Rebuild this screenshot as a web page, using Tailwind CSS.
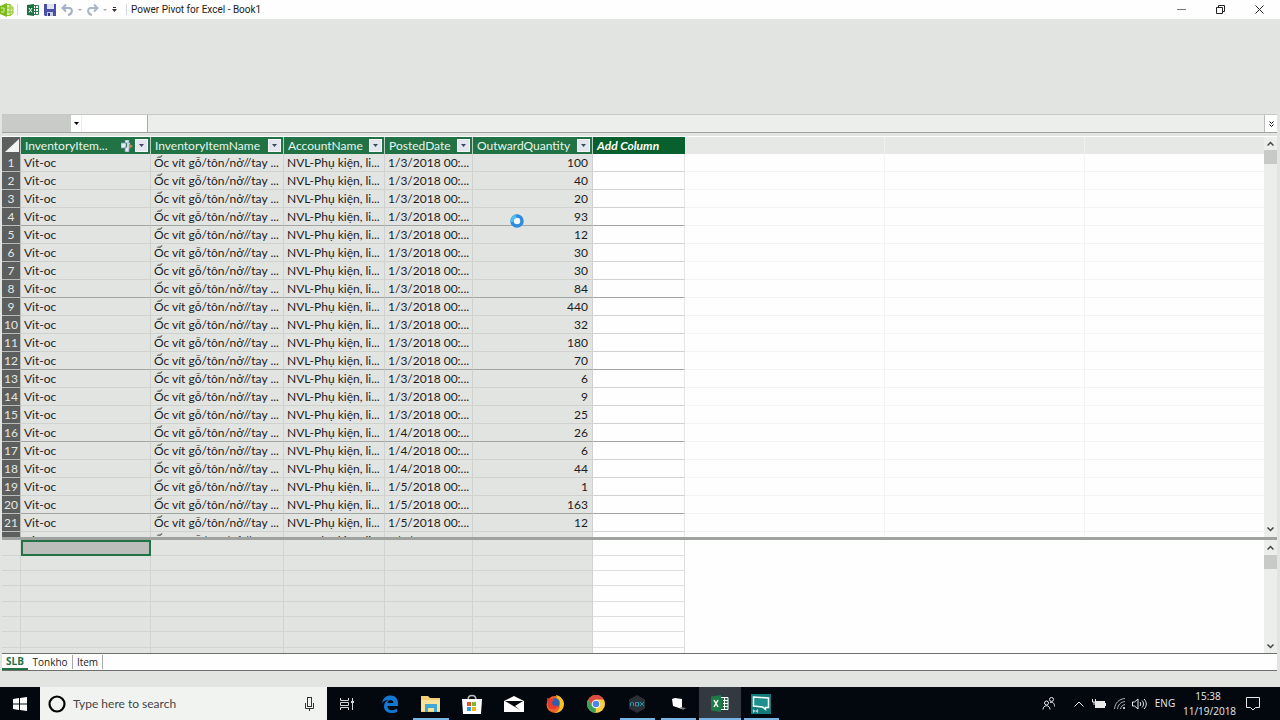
<!DOCTYPE html>
<html lang="en">
<head>
  <meta charset="UTF-8">
  <meta name="viewport" content="width=device-width, initial-scale=1.0">
  <title>Power Pivot for Excel - Book1</title>
  <script src="https://cdn.jsdelivr.net/npm/@tailwindcss/browser@4"></script>
</head>
<body class="h-screen flex flex-col overflow-hidden bg-[#e2e4e2] text-[#1c1c1c] text-[12px] font-['Lato','Open_Sans',sans-serif]">

  <!-- Title bar -->
  <header class="h-[19px] shrink-0 flex items-center bg-[#fdfefd]">
    <svg class="w-[14px] h-[14px]" viewBox="0 0 14 14">
      <path d="M0 3l7-3v14l-7-3z" fill="#7dbb1c"/>
      <path d="M7 1.500h3l3 3v6l-3 2H7" fill="#d9efad" stroke="#8cc52d"/>
      <path d="M7 5h6M7 9h6M10 1v12" stroke="#8cc52d"/>
      <path d="M1 5h3v4H1" fill="none" stroke="#d9efad"/>
    </svg>
    <span class="ml-[3px] w-px h-[11px] bg-gray-300"></span>
    <svg class="ml-[9px] w-3 h-3" viewBox="0 0 12 12">
      <path d="M6 1.500h5.500v9H6z" fill="#fff" stroke="#2a7a4d"/>
      <path d="M8.500 2v8M7 4.500h4M7 7.500h4" stroke="#2a7a4d"/>
      <path d="M0 1l7-1v12l-7-1z" fill="#1d6f42"/>
      <path d="M2 4l3 4.500M5 4L2 8.500" stroke="#fff"/>
    </svg>
    <button class="ml-[5px]" aria-label="Save">
      <svg class="w-3 h-3" viewBox="0 0 12 12">
        <path d="M0 0h12v12H1L0 11z" fill="#4a4fa8"/>
        <path d="M3 0h7v5H3z" fill="#dfe3f5"/>
        <path d="M3 8h6v4H3z" fill="#c9cde4"/>
        <path d="M4 9h2v3H4z" fill="#2f3379"/>
      </svg>
    </button>
    <button class="ml-[5px]" aria-label="Undo">
      <svg class="w-[13px] h-3" viewBox="0 0 13 12"><path d="M1 4h7c4 0 4 6-1 7M5 0.500L1.500 4 5 7.500" fill="none" stroke="#a3afc6" stroke-width="2"/></svg>
    </button>
    <svg class="ml-1 w-1 h-1" viewBox="0 0 4 4"><path d="M0 1h4L2 3z" fill="#aaa"/></svg>
    <button class="ml-1" aria-label="Redo">
      <svg class="w-[13px] h-3" viewBox="0 0 13 12"><path d="M12 4H5C1 4 1 10 6 11M8 0.500L11.500 4 8 7.500" fill="none" stroke="#a9b6c6" stroke-width="2"/></svg>
    </button>
    <svg class="ml-1 w-1 h-1" viewBox="0 0 4 4"><path d="M0 1h4L2 3z" fill="#aaa"/></svg>
    <button class="ml-[5px]" aria-label="Customize toolbar">
      <svg class="w-[5px] h-[6px]" viewBox="0 0 5 6"><path d="M1 0h3v1H1zM0 2h5L2.500 5z" fill="#333"/></svg>
    </button>
    <span class="ml-[9px] w-px h-[11px] bg-gray-300"></span>
    <h1 class="ml-1 text-[10px] leading-none font-['Roboto',sans-serif]">Power Pivot for Excel - Book1</h1>
    <div class="ml-auto mr-4 flex items-center gap-[30px]">
      <button aria-label="Minimize"><svg class="w-[9px] h-[9px]" viewBox="0 0 9 9"><path d="M0 4.500h9" stroke="#777"/></svg></button>
      <button aria-label="Restore"><svg class="w-[9px] h-[9px]" viewBox="0 0 9 9" fill="none" stroke="#222"><path d="M0.500 2.500h6v6h-6zM2.500 2V0.500h6v6H7"/></svg></button>
      <button aria-label="Close"><svg class="w-[9px] h-[9px]" viewBox="0 0 9 9"><path d="M0.500 0.500l8 8M8.500 0.500l-8 8" stroke="#222"/></svg></button>
    </div>
  </header>

  <main class="flex-1 min-h-0 flex flex-col pl-[2px] pr-[3px]">

    <!-- Empty ribbon -->
    <div class="h-[95px] shrink-0"></div>

    <!-- Formula bar -->
    <div class="h-[19px] shrink-0 flex border-t border-b border-t-[#c6c8c6] border-b-[#9fa39f] bg-[#eceeec]">
      <input class="w-[69px] bg-[#c9cbc9]" type="text" aria-label="Name box">
      <button class="w-[10px] bg-white flex items-center justify-center" aria-label="Name box list">
        <svg class="w-[5px] h-[3px]" viewBox="0 0 5 3"><path d="M0 0h5L2.500 3z" fill="#000"/></svg>
      </button>
      <div class="w-[67px] bg-white border-l border-r border-l-[#eceeec] border-r-[#a9aba9]"></div>
      <input class="flex-1 bg-[#eceeec]" type="text" aria-label="Formula">
      <button class="w-[13px] bg-white border-l border-[#bbb] flex items-center justify-center" aria-label="Expand formula bar">
        <svg class="w-[5px] h-[6px]" viewBox="0 0 5 6"><path d="M0.500 0.500l2 2 2-2M0.500 3.500l2 2 2-2" fill="none" stroke="#000"/></svg>
      </button>
    </div>
    <div class="h-1 shrink-0 border-b border-white"></div>

    <!-- Data grid -->
    <section class="flex-1 min-h-0 flex bg-[#fdfefd]">
      <div class="flex-1 min-w-0 overflow-hidden">
        <table class="w-full table-fixed border-separate border-spacing-0 whitespace-nowrap">
          <colgroup>
            <col class="w-[19px]"><col class="w-[130px]"><col class="w-[133px]"><col class="w-[101px]"><col class="w-[88px]"><col class="w-[120px]"><col class="w-[92px]"><col class="w-[200px]"><col class="w-[200px]"><col>
          </colgroup>
          <thead>
            <tr id="columns">
              <th class="h-[17px] p-0 bg-[#5c5f5d] border-r border-[#c5c8c5]" aria-label="Select all">
                <svg class="ml-[3px] w-[14px] h-[13px]" viewBox="0 0 14 13"><path d="M14 0v13H0z" fill="#f2f3f2"/></svg>
              </th>
            </tr>
          </thead>
          <tbody id="rows"></tbody>
        </table>
      </div>
      <div class="w-[13px] flex flex-col items-center bg-[#eceeec]">
        <svg class="my-1 w-[7px] h-[5px]" viewBox="0 0 7 5"><path d="M0.500 4.500l3-3 3 3" fill="none" stroke="#444" stroke-width="1.500"/></svg>
        <div class="w-full h-[14px] bg-[#c8cac8]"></div>
        <svg class="mt-auto mb-[5px] w-[7px] h-[5px]" viewBox="0 0 7 5"><path d="M0.500 0.500l3 3 3-3" fill="none" stroke="#444" stroke-width="1.500"/></svg>
      </div>
    </section>

    <!-- Splitter -->
    <div class="h-[3px] shrink-0 bg-[#9fa29f]"></div>

    <!-- Calculation area -->
    <section class="h-[113px] shrink-0 flex bg-[#fdfefd]">
      <div class="flex-1 min-w-0 overflow-hidden">
        <table class="w-[683px] table-fixed border-separate border-spacing-0" aria-label="Calculation area">
          <colgroup>
            <col class="w-[19px]"><col class="w-[130px]"><col class="w-[133px]"><col class="w-[101px]"><col class="w-[88px]"><col class="w-[120px]"><col class="w-[92px]">
          </colgroup>
          <tbody id="measures"></tbody>
        </table>
      </div>
      <div class="w-[13px] flex flex-col items-center bg-[#eceeec]">
        <svg class="my-[5px] w-[7px] h-[5px]" viewBox="0 0 7 5"><path d="M0.500 4.500l3-3 3 3" fill="none" stroke="#444" stroke-width="1.500"/></svg>
        <div class="w-full h-[14px] bg-[#c8cac8]"></div>
        <svg class="mt-auto mb-1 w-[7px] h-[5px]" viewBox="0 0 7 5"><path d="M0.500 0.500l3 3 3-3" fill="none" stroke="#444" stroke-width="1.500"/></svg>
      </div>
    </section>

    <!-- Sheet tabs -->
    <nav class="h-[18px] shrink-0 flex items-center border-t border-b border-[#6d706d] bg-[#fdfefd] text-[10px] leading-[14px] font-['Open_Sans',sans-serif]">
      <a href="#slb" class="w-[26px] text-center font-bold text-[#217346] border-b-2 border-[#217346]">SLB</a>
      <a href="#tonkho" class="w-[45px] text-center border-r border-[#aaa]">Tonkho</a>
      <a href="#item" class="w-[30px] text-center border-r border-[#aaa]">Item</a>
    </nav>
    <div class="h-4 shrink-0"></div>
  </main>

  <!-- Taskbar -->
  <footer class="h-[33px] shrink-0 flex bg-[#03080e] text-[#e8eaec]">
    <button class="w-10 flex items-center justify-center" aria-label="Start">
      <svg class="w-[14px] h-[14px]" viewBox="0 0 14 14"><path d="M0 2l6-1v5.500H0zM7 1l7-1v6.500H7zM0 7.500h6V13l-6-1zM7 7.500h7V14l-7-1z" fill="#fff"/></svg>
    </button>
    <label class="w-[287px] flex items-center bg-[#f1f3f1] pl-2 pr-[13px]">
      <svg class="w-[18px] h-[18px]" viewBox="0 0 18 18"><circle cx="9" cy="9" r="7.500" fill="none" stroke="#000" stroke-width="2.200"/></svg>
      <input class="ml-[7px] flex-1 min-w-0 text-[12px] placeholder:text-[#444]" type="text" placeholder="Type here to search" aria-label="Search">
      <svg class="w-[9px] h-[14px]" viewBox="0 0 9 14" fill="none" stroke="#333"><rect x="2.500" y="0.500" width="4" height="9"/><path d="M0.500 6v5.500h8V6M4.500 11.500V14"/></svg>
    </label>
    <button class="w-[40px] flex items-center justify-center" aria-label="Task view">
      <svg class="w-[14px] h-[14px]" viewBox="0 0 14 14" fill="none" stroke="#d5d7d9"><path d="M0.500 1v2.500h8V1M0.500 13v-2.500h8V13M0.500 5.500h8v3h-8zM12.500 1v12"/><path d="M11 5h3" stroke-width="2"/></svg>
    </button>
    <div class="w-[413px] ml-[2px] flex">
      <button class="flex-1 flex items-center justify-center" aria-label="Edge">
        <svg class="w-[18px] h-[18px]" viewBox="0 0 18 18"><path d="M1 8C2 3 5 0.500 9.500 0.500c5 0 7.500 3.500 7.500 8V11H6.500c0 5 6 5 9.500 2.500V17C10 19.500 3 17.500 3 11.500 3 8 5 6 7.500 5 4.500 5 2.500 6 1 8zM6.500 8h6c0-4-5.500-4-6 0z" fill="#1477d2"/></svg>
      </button>
      <button class="flex-1 flex items-center justify-center relative" aria-label="File Explorer">
        <svg class="w-[19px] h-4" viewBox="0 0 19 16"><path d="M0 0h7l2 2h10v14H0z" fill="#f3d078"/><path d="M0 4h19v11H0z" fill="#f9e29a"/><path d="M4 16V8h12v8h-3v-4H7v4z" fill="#41a9d6"/></svg>
        <span class="absolute bottom-0 inset-x-[3px] h-[2px] bg-[#76b5e6]"></span>
      </button>
      <button class="flex-1 flex items-center justify-center" aria-label="Store">
        <svg class="w-5 h-5" viewBox="0 0 20 20"><path d="M6 6c0-6 8-6 8 0" fill="none" stroke="#bbb" stroke-width="1.500"/><path d="M0 5h20l-1 15H1z" fill="#fff"/><path d="M5 8h4v4H5z" fill="#e8502c"/><path d="M10 8h4v4h-4z" fill="#7db82b"/><path d="M5 13h4v4H5z" fill="#2a9fe0"/><path d="M10 13h4v4h-4z" fill="#f5b70d"/></svg>
      </button>
      <button class="flex-1 flex items-center justify-center" aria-label="Mail">
        <svg class="w-5 h-4" viewBox="0 0 20 16"><path d="M0 5l10-5 10 5v11H0z" fill="#fff"/><path d="M1 5h18l-8 5 5 4L1 5z" fill="#03080e"/></svg>
      </button>
      <button class="flex-1 flex items-center justify-center" aria-label="Firefox">
        <svg class="w-[18px] h-[18px]" viewBox="0 0 18 18"><circle cx="9" cy="9.500" r="8.500" fill="#f0622a"/><path d="M10 0c5 1 8 5 8 9 0 5-4 9-9 9 5-3 6-7 3-11z" fill="#fcc21f"/><circle cx="9" cy="8" r="4.800" fill="#2e5fae"/><path d="M1 3l3 1c2-1 3 0 4 1L6 7c0 4 3 5 6 3-1 5-8 6-10 1z" fill="#e83b2c"/></svg>
      </button>
      <button class="flex-1 flex items-center justify-center" aria-label="Chrome">
        <svg class="w-[18px] h-[18px]" viewBox="0 0 18 18"><circle cx="9" cy="9" r="9" fill="#f9ce3e"/><path d="M1.200 4.500A9 9 0 0 1 16.800 4.500H9L5 11z" fill="#dc4b3e"/><path d="M1.200 4.500L5 11.300 9 13.500 8.500 18A9 9 0 0 1 1.200 4.500z" fill="#38a155"/><circle cx="9" cy="9" r="4.300" fill="#fff"/><circle cx="9" cy="9" r="3.300" fill="#4b86ec"/></svg>
      </button>
      <button class="flex-1 flex items-center justify-center relative" aria-label="Nox">
        <svg class="w-[18px] h-[18px]" viewBox="0 0 18 18"><path d="M9 0l8 4.500v9L9 18l-8-4.500v-9z" fill="#2b2f38"/><path d="M2.500 11V8q2-1.500 3 0v3M7.500 7.500h3v3.500h-3zM12 7l4 4M16 7l-4 4" fill="none" stroke="#2298a8"/></svg>
        <span class="absolute bottom-0 inset-x-[3px] h-[2px] bg-[#76b5e6]"></span>
      </button>
      <button class="flex-1 flex items-center justify-center relative" aria-label="Notes">
        <svg class="w-[15px] h-3" viewBox="0 0 15 12"><path d="M1 1l3-1 7 1v10L2 8z" fill="#fff"/><path d="M9 9l6 1-3 2z" fill="#70777c"/></svg>
        <span class="absolute bottom-0 inset-x-[3px] h-[2px] bg-[#76b5e6]"></span>
      </button>
      <button class="flex-1 flex items-center justify-center relative bg-[#323940]" aria-label="Excel">
        <svg class="w-[18px] h-[17px]" viewBox="0 0 18 17"><path d="M10 2.500h7v12h-7" fill="#1d7044" stroke="#fff"/><path d="M12 5.500h5M12 8.500h5M12 11.500h5M13.500 3v11" stroke="#fff"/><path d="M0 1.500L10 0v17L0 15.500z" fill="#1f7a48"/><path d="M3 5l4 7M7 5l-4 7" stroke="#fff" stroke-width="1.500"/></svg>
        <span class="absolute bottom-0 inset-x-0 h-[2px] bg-[#76b5e6]"></span>
      </button>
      <button class="flex-1 flex items-center justify-center relative" aria-label="Screen recorder">
        <svg class="w-5 h-5" viewBox="0 0 20 20"><path d="M0 0h20v20H0z" fill="#157a7b"/><path d="M2.500 3l15 1v9.500h-3v2l-3-2.500-9-1z" fill="#1d8f8e" stroke="#fff" stroke-width="1.500"/><path d="M2 15v4l5-4v4z" fill="#b9dcdc"/></svg>
        <span class="absolute bottom-0 inset-x-[3px] h-[2px] bg-[#76b5e6]"></span>
      </button>
    </div>
    <div class="ml-auto pr-5 flex items-center text-[10px] leading-[15px] font-['Open_Sans',sans-serif]">
      <svg class="w-[13px] h-[13px]" viewBox="0 0 13 13" fill="none" stroke="#e8eaec"><circle cx="4.500" cy="6" r="2"/><path d="M1 12.500c0-5 7-5 7 0"/><circle cx="9.500" cy="2.500" r="2"/><path d="M8 5.500c3-1 4.500 1 4.500 4"/></svg>
      <svg class="ml-[19px] w-[10px] h-[6px]" viewBox="0 0 10 6" fill="none" stroke="#e8eaec"><path d="M0.500 5.500l4.500-4.500 4.500 4.500"/></svg>
      <svg class="ml-2 w-[14px] h-[10px]" viewBox="0 0 14 10"><path d="M3 2h10v2h1v3h-1v2H3z" fill="#e8eaec"/><path d="M0.500 0v3h3V0M2 3v3" fill="none" stroke="#e8eaec"/></svg>
      <svg class="ml-2 w-[11px] h-[11px]" viewBox="0 0 11 11" fill="none" stroke="#aeb2b5"><path d="M0.500 11C1 5 5 1 11 0.500M3.500 11c0.500-4 3-7 7.500-7.500M6.500 11c0-2 2-4 4.500-4.500"/><circle cx="10" cy="10" r="0.700" stroke="#fff"/></svg>
      <svg class="ml-[7px] w-[15px] h-3" viewBox="0 0 15 12" fill="none" stroke="#e8eaec"><path d="M0.500 4v4h2L6 11V1L2.500 4zM8 4c1 1 1 3 0 4M10 2.500c2 2 2 5 0 7M12 1c3 3 3 7 0 10"/></svg>
      <span class="w-[36px] text-center">ENG</span>
      <time class="w-[50px] text-center">15:38<br>11/19/2018</time>
      <button class="ml-[13px]" aria-label="Notifications">
        <svg class="w-[14px] h-[14px]" viewBox="0 0 14 14" fill="none" stroke="#e8eaec"><path d="M0.500 0.500h13v10h-4L7 13l-2.500-2.500h-4z"/></svg>
      </button>
    </div>
  </footer>

  <!-- Busy cursor -->
  <svg class="absolute left-[510px] top-[214px] w-[14px] h-[14px]" viewBox="0 0 14 14"><circle cx="7" cy="7" r="5" fill="#f4f8fb" stroke="#2f8be0" stroke-width="3.500"/><path d="M2.200 8A5 5 0 0 1 6 2.200" fill="none" stroke="#4cc0ee" stroke-width="3.500"/></svg>

  <script>
    const columns = ["InventoryItem...", "InventoryItemName", "AccountName", "PostedDate", "OutwardQuantity"];
    const quantities = [100, 40, 20, 93, 12, 30, 30, 84, 440, 32, 180, 70, 6, 9, 25, 26, 6, 44, 1, 163, 12, 8];

    const relationIcon = `<svg class="ml-auto mr-[2px] w-3 h-3 shrink-0" viewBox="0 0 12 12"><path d="M4 0h4v3H4zM0 3h5v5H0zM4 7h4v5H4z" fill="#e4ecf6" stroke="#7c93ae" stroke-width=".7"/><path d="M6 3h3v5H6z" fill="#c3d3e6"/><path d="M8 4l4 2-4 3z" fill="#c98b4a"/></svg>`;

    const header = document.getElementById("columns");
    columns.forEach((name, i) => {
      header.insertAdjacentHTML("beforeend", `
        <th class="h-[17px] p-0 bg-[#217346] border-r border-[#b9cfc1] font-normal text-[#e9f3ec]">
          <div class="flex items-center h-[17px] pl-1 pr-[2px]">
            <span class="leading-[17px]">${name}</span>
            ${i === 0 ? relationIcon : ""}
            <button class="${i === 0 ? "" : "ml-auto"} w-[13px] h-[13px] shrink-0 flex items-center justify-center bg-[#e3e6ec] border border-[#f5f6f8]" aria-label="Filter">
              <svg class="w-[5px] h-[3px]" viewBox="0 0 5 3"><path d="M0 0h5L2.500 3z" fill="#3c4763"/></svg>
            </button>
          </div>
        </th>`);
    });
    header.insertAdjacentHTML("beforeend", `
      <th class="h-[17px] p-0 pl-1 bg-[#07602e] text-left text-white font-bold italic leading-[17px]">Add Column</th>
      <th class="p-0 bg-[#e6e8e6] border-r border-[#eff0ef]"></th>
      <th class="p-0 bg-[#e6e8e6] border-r border-[#eff0ef]"></th>
      <th class="p-0 bg-[#e6e8e6]"></th>`);

    document.getElementById("rows").innerHTML = quantities.map((quantity, i) => {
      const date = i < 15 ? "1/3/2018 00:..." : i < 18 ? "1/4/2018 00:..." : "1/5/2018 00:...";
      // every fourth row closes with a darker rule
      const line = i % 4 === 3 ? "border-b-[#a3a6a3]" : "border-b-[#cfd2cf]";
      const cell = `h-[18px] p-0 pt-px pl-[3px] leading-[16px] bg-[#e2e4e2] border-b border-r border-r-[#cfd2cf] ${line}`;
      return `
        <tr>
          <th class="h-[18px] p-0 pt-px leading-[16px] bg-[#5c5f5d] text-[#e4e6e4] font-normal border-b border-r border-[#b9bcb9]">${i + 1}</th>
          <td class="${cell}">Vit-oc</td>
          <td class="${cell}">Ốc vít gỗ/tôn/nở//tay ...</td>
          <td class="${cell}">NVL-Phụ kiện, li...</td>
          <td class="${cell} text-right pr-1">${date}</td>
          <td class="${cell} text-right pr-1">${quantity}</td>
          <td class="p-0 border-b border-r border-r-[#e6e8e6] ${line}"></td>
          <td class="p-0 border-b border-r border-[#f3f4f3]"></td>
          <td class="p-0 border-b border-r border-[#f3f4f3]"></td>
          <td class="p-0 border-b border-[#f3f4f3]"></td>
        </tr>`;
    }).join("");

    let measures = "";
    for (let i = 0; i < 8; i++) {
      const height = i % 3 === 0 ? "h-[16px]" : "h-[15px]";
      const cell = `${height} p-0 bg-[#e2e4e2] border-b border-r border-[#d1d4d1]`;
      const first = i === 0 ? `${height} p-0 bg-[#bcbebc] border-2 border-[#217346]` : cell;
      measures += `
        <tr>
          <td class="${cell}"></td><td class="${first}"></td><td class="${cell}"></td>
          <td class="${cell}"></td><td class="${cell}"></td><td class="${cell}"></td>
          <td class="p-0 border-b border-r border-[#dcdfdc]"></td>
        </tr>`;
    }
    document.getElementById("measures").innerHTML = measures;
  </script>
</body>
</html>
